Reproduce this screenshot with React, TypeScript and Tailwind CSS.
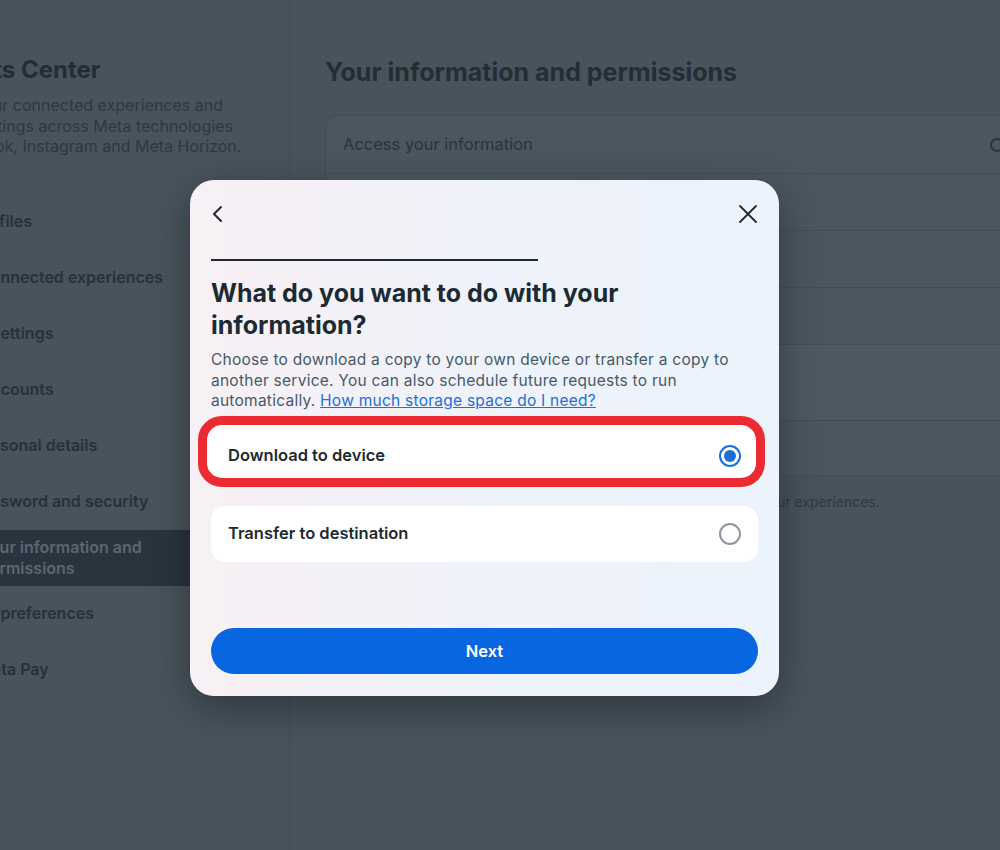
import { useState } from "react";

const navItems = [
  { label: "Profiles", offset: "-ml-[27px]" },
  { label: "Connected experiences", offset: "-ml-[21px]" },
  { label: "Settings", offset: "-ml-[10px]" },
  { label: "Accounts", offset: "-ml-[20px]" },
  { label: "Personal details", offset: "-ml-[26px]" },
  { label: "Password and security", offset: "-ml-[28px]" },
  { label: "Your information and permissions", offset: "-ml-[20px]", active: true },
  { label: "Ad preferences", offset: "-ml-[25px]" },
  { label: "Meta Pay", offset: "-ml-[23px]" },
];

const rows = [
  "Access your information",
  "Download your information",
  "Transfer a copy of your information",
  "Search history",
];

function Radio({ checked }: { checked: boolean }) {
  return checked ? (
    <span className="w-[22px] h-[22px] rounded-full border-2 border-[#1a6ed8] flex items-center justify-center">
      <span className="w-[12px] h-[12px] rounded-full bg-[#1a6ed8]" />
    </span>
  ) : (
    <span className="w-[22px] h-[22px] rounded-full border-2 border-[#8d969e]" />
  );
}

export default function App() {
  const [choice, setChoice] = useState<"download" | "transfer">("download");

  return (
    <div className="relative w-[1000px] h-[850px] overflow-hidden bg-[#48535c] flex font-['Inter','Noto_Sans',sans-serif]">
      {/* Sidebar (dimmed) */}
      <aside className="w-[290px] shrink-0 border-r border-[#424c55] overflow-hidden">
        <h1 className="-ml-[97px] mt-[53px] text-[24px] leading-[34px] font-bold text-[#232d36] whitespace-nowrap">
          Accounts Center
        </h1>
        <p className="-ml-[91px] mt-[8px] text-[16px] leading-[20.5px] text-[#2d3841] whitespace-nowrap">
          Manage your connected experiences and
          <br />
          account settings across Meta technologies
          <br />
          like Facebook, Instagram and Meta Horizon.
        </p>
        <nav className="mt-[37px] mr-[10px]">
          {navItems.map((item) => (
            <div
              key={item.label}
              className={`h-[56px] flex items-center ${
                item.active ? "bg-[#29343e]" : ""
              }`}
            >
              <span
                className={`${item.offset} w-[200px] text-[16px] leading-[21px] font-semibold ${
                  item.active ? "text-[#5b6771]" : "text-[#27313a]"
                }`}
              >
                {item.label}
              </span>
            </div>
          ))}
        </nav>
      </aside>

      {/* Main content (dimmed) */}
      <main className="flex-1 pl-[35px] overflow-hidden">
        <h2 className="mt-[55px] text-[25px] leading-[34px] font-bold text-[#232d36] whitespace-nowrap">
          Your information and permissions
        </h2>
        <div className="mt-[26px] w-[720px] rounded-xl border border-[#434d56] bg-[#4b565f] overflow-hidden">
          {rows.map((row, i) => (
            <div
              key={row}
              className={`h-[57px] pl-[17px] pr-[40px] flex items-center justify-between ${
                i > 0 ? "border-t border-[#434d56]" : ""
              }`}
            >
              <span className="text-[16.5px] text-[#2a343d]">{row}</span>
              {i === 0 && (
                <span className="w-[14px] h-[14px] rounded-full border-2 border-[#2a343d]" />
              )}
            </div>
          ))}
          <div className="h-[76px] pl-[17px] flex items-center border-t border-[#434d56] bg-[#4e5962]">
            <span className="text-[16.5px] text-[#2a343d]">Apps and websites</span>
          </div>
          <div className="h-[55px] pl-[17px] flex items-center border-t border-[#434d56]">
            <span className="text-[16.5px] text-[#2a343d]">Your activity off Meta technologies</span>
          </div>
        </div>
        <p className="mt-[15px] text-[14px] text-[#2e3942] whitespace-nowrap">
          Choose what information is used to help improve and personalize your experiences.
        </p>
      </main>

      {/* Modal */}
      <div className="absolute left-[190px] top-[180px] w-[589px] h-[516px] rounded-[24px] bg-gradient-to-r from-[#f8f0f5] via-[#eff2fa] to-[#ebf3fc] shadow-[0_12px_40px_rgba(0,0,0,0.35)] px-[21px] pt-[22px] pb-[22px] flex flex-col">
        <div className="flex items-center justify-between h-[24px]">
          <button className="w-[24px] h-[24px] flex items-center">
            <svg width="16" height="18" viewBox="0 0 16 18" fill="none" stroke="#1c2b33" strokeWidth="2" strokeLinecap="round" strokeLinejoin="round">
              <path d="M10 2 L3 9 L10 16" />
            </svg>
          </button>
          <button className="w-[24px] h-[24px] flex items-center justify-center -mr-[2px]">
            <svg width="20" height="20" viewBox="0 0 20 20" fill="none" stroke="#1c2b33" strokeWidth="1.8" strokeLinecap="round">
              <path d="M2 2 L18 18 M18 2 L2 18" />
            </svg>
          </button>
        </div>

        <div className="mt-[33px] w-[327px] h-[2px] bg-[#1c2b33]" />

        <h3 className="mt-[16px] text-[25px] leading-[32px] font-bold text-[#1c2b33]">
          What do you want to do with your
          <br />
          information?
        </h3>
        <p className="mt-[9px] text-[15.5px] leading-[20.5px] tracking-[0.25px] text-[#465a69] whitespace-nowrap">
          Choose to download a copy to your own device or transfer a copy to
          <br />
          another service. You can also schedule future requests to run
          <br />
          automatically.{" "}
          <a href="#" className="text-[#216fdb] underline">
            How much storage space do I need?
          </a>
        </p>

        <button
          onClick={() => setChoice("download")}
          className="relative mt-[16px] h-[56px] px-[17px] flex items-center justify-between rounded-[14px] bg-white text-left"
        >
          <span className="absolute -left-[13px] -right-[7px] -top-[12px] -bottom-[3px] rounded-[24px] border-[9px] border-[#ec2a32] bg-white" />
          <span className="relative text-[16.5px] font-semibold text-[#1c2b33]">Download to device</span>
          <span className="relative">
            <Radio checked={choice === "download"} />
          </span>
        </button>

        <button
          onClick={() => setChoice("transfer")}
          className="mt-[22px] h-[56px] px-[17px] flex items-center justify-between rounded-[14px] bg-white text-left"
        >
          <span className="text-[16.5px] font-semibold text-[#1c2b33]">Transfer to destination</span>
          <Radio checked={choice === "transfer"} />
        </button>

        <button className="mt-auto h-[46px] rounded-full bg-[#0866e0] text-white text-[16.5px] font-semibold">
          Next
        </button>
      </div>
    </div>
  );
}
